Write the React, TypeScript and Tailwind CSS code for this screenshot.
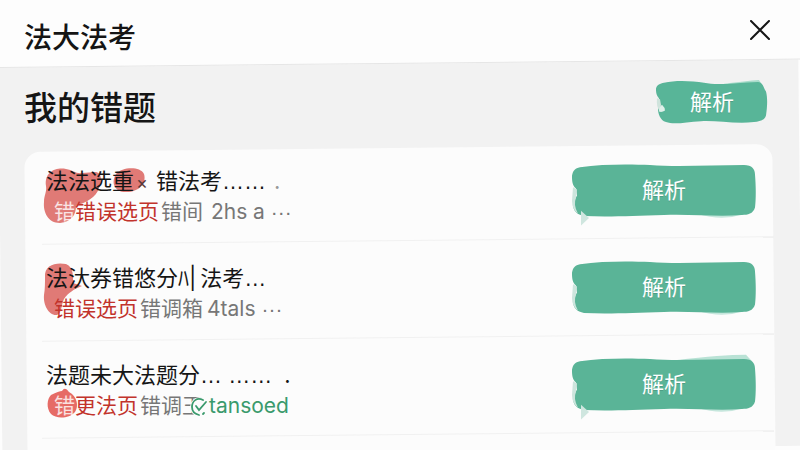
import type { ReactNode } from "react";

type Row = {
  title: ReactNode;
  badge?: string;
  marker: string;
  tail: ReactNode;
};

function Dots({ children }: { children: string }) {
  return <span className="font-['Liberation_Sans',sans-serif]">{children}</span>;
}

// open circle with a tick, as drawn in front of the green note
function TickMark() {
  return (
    <svg className="-ml-3.5 inline h-5 w-5 align-[-4px]" viewBox="0 0 20 20" fill="none" stroke="#3a9a6c" strokeWidth="1.8" strokeLinecap="round" aria-hidden="true">
      <circle cx="11" cy="10" r="10" fill="#fcfcfc" stroke="none" />
      <path d="M14 3 C8 0 3 4 3 10 C3 14 6 17 10 18" />
      <path d="M7 9 L10 13 L17 5" />
      <path d="M14 17 L15 16" />
    </svg>
  );
}

const rows: Row[] = [
  {
    title: (
      <>
        法法选重
        <span className="ml-0.5 text-lg leading-none text-[#5b3a3a]">×</span>
        <span className="ml-2">错法考</span>
        <Dots>……</Dots>
        <span className="ml-2 text-[#999]">.</span>
      </>
    ),
    badge: "错",
    marker: "错误选页",
    tail: (
      <>
        错间 <span className="ml-0.5">2hs a</span> <Dots> ···</Dots>
      </>
    ),
  },
  {
    title: (
      <>
        法汏券错悠分ﾊ|
        <span className="ml-1">法考</span>
        <Dots>…</Dots>
      </>
    ),
    marker: "错误选页",
    tail: (
      <>
        错调箱<span className="ml-1">4tals</span> <Dots> ···</Dots>
      </>
    ),
  },
  {
    title: (
      <>
        法题未大法题分<Dots>… ……</Dots>
        <span className="ml-3">.</span>
      </>
    ),
    badge: "错",
    marker: "更法页",
    tail: (
      <>
        错调王
        <TickMark />
        <span className="text-[#3a9a6c]">tansoed</span>
      </>
    ),
  },
];

// small hand painted patch behind the page level button
function SmallBrush() {
  return (
    <svg className="absolute inset-0 size-full overflow-visible" viewBox="0 0 112 46" preserveAspectRatio="none" aria-hidden="true">
      <path d="M68 4 Q90 1 103 0 L106 5 L72 8Z" fill="#a9dccb" />
      <path d="M8 3 C20 0 36 1 48 3 C62 6 80 3 102 2 C108 3 107 8 110 12 C112 20 111 30 110 37 C108 43 103 43 98 44 C78 46 60 42 45 43 C30 44 18 47 10 44 C4 42 2 35 2 30 L3 19 C0 16 0 12 0 9 C1 5 4 4 8 3Z" fill="#58b598" />
      <path d="M1 19 L4 20 L5 26 L4 33 Q0 28 1 19Z" fill="#cfe3dc" />
      <path d="M3 33 Q3 28 6 26 Q9 29 9 32 Q6 34 3 33Z" fill="#dff0ea" />
    </svg>
  );
}

function WideBrush({ tip, swash }: { tip: boolean; swash: boolean }) {
  return (
    <svg className="absolute inset-0 size-full overflow-visible" viewBox="0 0 184 50" preserveAspectRatio="none" aria-hidden="true">
      {swash && <path d="M105 2 Q150 -3 174 -3 L180 3 L110 6Z" fill="#b9e2d5" />}
      <path d="M125 47 Q150 54 168 48Z" fill="#c5e6dc" />
      <path d="M8 3 C30 0 58 0 78 1 C105 3 140 1 172 1 C180 1 183 5 183 10 C184 22 184 33 183 41 C181 47 176 48 170 48 C145 50 120 47 92 48 C60 49 35 50 12 49 C5 48 1 44 1 38 Q3 32 5 30 L4 23 C0 20 0 15 0 11 C1 6 3 4 8 3Z" fill="#5ab497" />
      <path d="M1 22 L5 24 L4 32 Q1 38 6 47 Q0 43 0 35Z" fill="#cde5dd" />
      {tip && <path d="M9 44 L17 51 L9 58Z" fill="#cfe6df" />}
    </svg>
  );
}

const blobs = [
  "M4 22 C2 8 14 3 24 5 C31 6 34 10 40 9 L54 8 C60 9 60 17 57 24 C54 34 44 38 34 42 C34 50 30 58 18 59 C6 59 1 48 2 38 C2 31 5 28 4 22Z M74 10 C80 3 98 2 102 10 C105 20 96 28 85 28 C74 29 68 20 74 10Z",
  "M3 16 C2 4 14 1 24 3 C32 6 31 16 31 22 L40 25 C32 28 26 32 22 38 C19 44 20 52 15 54 C7 55 1 44 2 34 C3 28 3 22 3 16Z",
  "M9 37 Q17 33 20 33 Q23 28 27 34 C35 38 37 48 33 54 C27 61 14 61 9 56 C4 50 5 41 9 37Z",
];

export default function App() {
  return (
    <main className="relative min-h-screen overflow-hidden bg-[#fdfdfd] font-[Inter,'Noto_Sans_CJK_SC',sans-serif] text-[#151515]">
      <div className="absolute inset-0 rotate-[-0.6deg] bg-[#f2f2f2]" />
      <header className="relative flex h-17 items-center justify-between px-6">
        <div className="absolute inset-0 origin-top-left skew-y-[-0.6deg] border-b border-[#e6e6e6] bg-[#fdfdfd]" />
        <h2 className="relative pt-2 text-[28px] leading-none font-medium">法大法考</h2>
        <button aria-label="关闭" className="relative mb-2 flex size-8 items-center justify-center">
          <svg className="size-5" viewBox="0 0 20 20" fill="none" stroke="#151515" strokeWidth="2" strokeLinecap="round" aria-hidden="true">
            <path d="M1 1 L19 19 M19 1 L1 19" />
          </svg>
        </button>
      </header>
      <section className="relative">
        <div className="flex h-19 items-center justify-between pr-8 pl-6">
          <h1 className="pt-1 text-[33px] leading-none font-medium">我的错题</h1>
          <button className="relative mb-2 h-11 w-28 text-[22px] text-white">
            <SmallBrush />
            <span className="relative text-shadow-2xs">解析</span>
          </button>
        </div>
        <div className="relative mx-[26px]">
          <div className="absolute inset-x-0 top-1 h-80 rotate-[-0.6deg] rounded-2xl bg-[#fcfcfc]" />
          <ul className="relative">
            {rows.map((row, i) => (
              <li key={i} className="relative flex justify-between pr-[18px] pb-3.5 pl-5">
                <div className="relative pt-[21px]">
                  <svg className="absolute top-5 -left-1 h-16 w-28 overflow-visible" viewBox="0 0 112 64" aria-hidden="true">
                    <path d={blobs[i]} fill={i === 2 ? "#e66b66" : "#e07a76"} />
                  </svg>
                  <p className="relative h-8 text-[22px] leading-8 whitespace-nowrap">{row.title}</p>
                  <p className="relative h-[30px] pl-2 text-[21px] leading-[30px] whitespace-nowrap text-[#777]">
                    {row.badge && <span className="text-white/80">{row.badge}</span>}
                    <span className="mr-0.5 text-[#c2332b]">{row.marker}</span>
                    {row.tail}
                  </p>
                </div>
                <button className="relative mt-5 h-[53px] w-46 text-[22px] text-white">
                  <WideBrush tip={i !== 1} swash={i === 2} />
                  <span className="relative text-shadow-2xs">解析</span>
                </button>
                <div className="absolute right-0 bottom-0 left-4 h-px skew-y-[-0.6deg] bg-[#f1f1f1]" />
              </li>
            ))}
          </ul>
        </div>
      </section>
    </main>
  );
}
